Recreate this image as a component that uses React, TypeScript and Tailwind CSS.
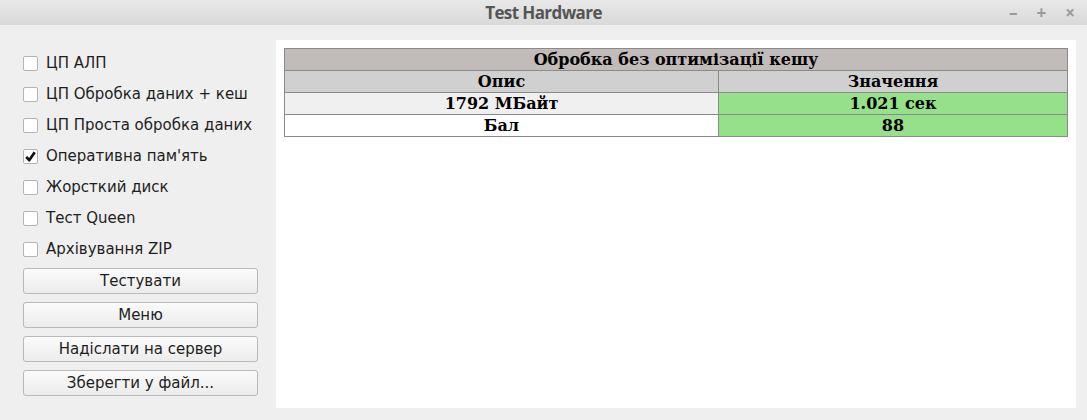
import { useState } from "react";

const tests = [
  { label: "ЦП АЛП", checked: false },
  { label: "ЦП Обробка даних + кеш", checked: false },
  { label: "ЦП Проста обробка даних", checked: false },
  { label: "Оперативна пам'ять", checked: true },
  { label: "Жорсткий диск", checked: false },
  { label: "Тест Queen", checked: false },
  { label: "Архівування ZIP", checked: false },
];

const buttons = ["Тестувати", "Меню", "Надіслати на сервер", "Зберегти у файл..."];

const Checkbox = ({ label, initial }: { label: string; initial: boolean }) => {
  const [checked, setChecked] = useState(initial);
  return (
    <label className="flex h-[31px] items-center gap-[8px] cursor-default" onClick={() => setChecked(!checked)}>
      <span className="flex h-[15px] w-[15px] items-center justify-center rounded-[2px] border border-[#b4b4b4] bg-white">
        {checked && (
          <svg width="11" height="11" viewBox="0 0 11 11">
            <path d="M1.3 5.8 L4.2 9.2 L9.7 1.3" fill="none" stroke="#111" strokeWidth="2.7" strokeLinejoin="round" />
          </svg>
        )}
      </span>
      <span className="text-[15px] text-[#1e1e1e]">{label}</span>
    </label>
  );
};

export default function App() {
  return (
    <div className="flex h-[420px] w-[1087px] flex-col bg-[#efefef] font-['DejaVu_Sans',sans-serif]">
      {/* Title bar */}
      <div className="relative flex h-[25px] items-center justify-center bg-gradient-to-b from-[#e8e8e8] to-[#d9d9d9]">
        <span className="font-['Open_Sans',sans-serif] text-[17px] font-bold tracking-[-0.6px] text-[#555555]">
          Test Hardware
        </span>
        <div className="absolute right-[12px] top-0 flex h-[25px] items-center gap-[19px] font-['Open_Sans',sans-serif] text-[17px] font-bold text-[#9a9a9a]">
          <span>–</span>
          <span>+</span>
          <span>×</span>
        </div>
      </div>

      <div className="flex flex-1 pl-[23px] pr-[11px] pt-[15px] pb-[12px]">
        {/* Left controls */}
        <div className="flex w-[235px] flex-col pt-[7.5px]">
          {tests.map((t) => (
            <Checkbox key={t.label} label={t.label} initial={t.checked} />
          ))}
          <div className="mt-[3.5px] flex flex-col gap-[8px]">
            {buttons.map((b) => (
              <button
                key={b}
                className="h-[26px] w-full rounded-[3px] border border-[#b9b9b9] bg-gradient-to-b from-[#fbfbfb] to-[#ececec] text-[15px] text-[#1e1e1e]"
              >
                {b}
              </button>
            ))}
          </div>
        </div>

        {/* Result panel */}
        <div className="ml-[18px] flex-1 bg-white p-[8px]">
          <table className="w-full border-collapse font-['DejaVu_Serif',serif] text-[16px] font-bold text-black">
            <tbody>
              <tr className="h-[22px]">
                <td colSpan={2} className="border border-[#8a8a8a] bg-[#c1bbba] text-center leading-[20px]">
                  Обробка без оптимізації кешу
                </td>
              </tr>
              <tr className="h-[22px]">
                <td className="w-[434px] border border-[#8a8a8a] bg-[#d0d0d0] text-center leading-[20px]">Опис</td>
                <td className="border border-[#8a8a8a] bg-[#d0d0d0] text-center leading-[20px]">Значення</td>
              </tr>
              <tr className="h-[22px]">
                <td className="border border-[#8a8a8a] bg-[#f0f0f0] text-center leading-[20px]">1792 МБайт</td>
                <td className="border border-[#8a8a8a] bg-[#95e18a] text-center leading-[20px]">1.021 сек</td>
              </tr>
              <tr className="h-[22px]">
                <td className="border border-[#8a8a8a] bg-white text-center leading-[20px]">Бал</td>
                <td className="border border-[#8a8a8a] bg-[#95e18a] text-center leading-[20px]">88</td>
              </tr>
            </tbody>
          </table>
        </div>
      </div>
    </div>
  );
}
